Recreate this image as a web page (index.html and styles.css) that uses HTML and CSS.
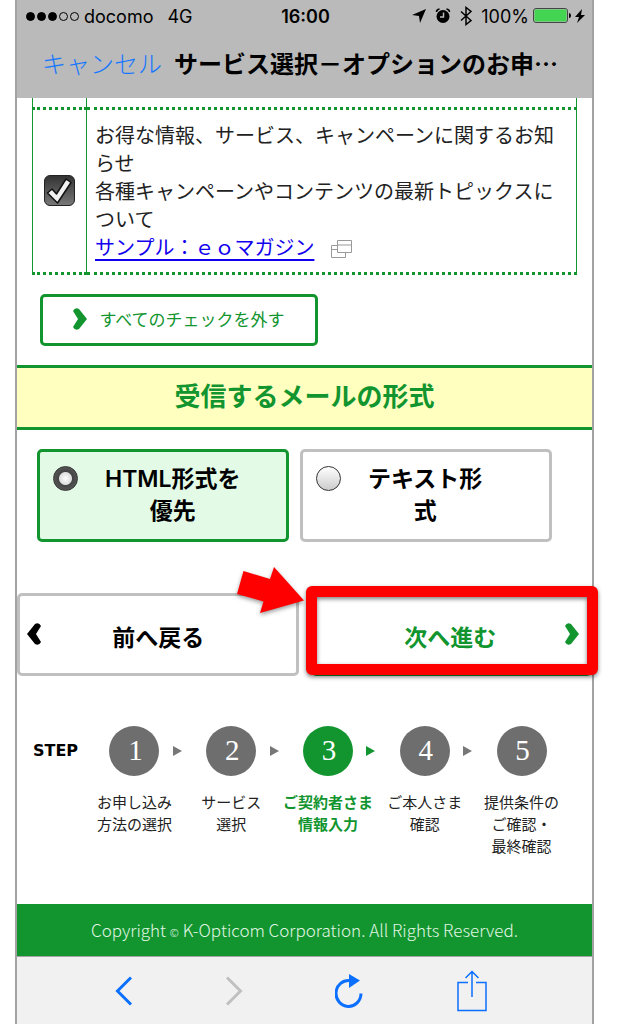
FILE: index.html
```html
<!DOCTYPE html>
<html lang="ja">
<head>
<meta charset="UTF-8">
<meta name="viewport" content="width=device-width, initial-scale=1.0">
<title>サービス選択－オプションのお申し込み</title>
<link rel="stylesheet" href="styles.css">
</head>
<body>
<div class="phone">
    <header class="top">
        <div class="status">
            <div class="status-left">
                <span class="signal"><i></i><i></i><i></i><i class="off"></i><i class="off"></i></span>
                <span>docomo</span>
                <span class="network">4G</span>
            </div>
            <span class="time">16:00</span>
            <div class="status-right">
                <svg width="14" height="14" viewBox="0 0 14 14"><path d="M0 6 L14 0 L8 14 L7 7 Z"/></svg>
                <svg class="alarm" width="16" height="16" viewBox="0 0 16 16"><circle cx="8" cy="8.500" r="6.500"/><path d="M1.500 4 Q1.500 1.500 4.500 1 M14.500 4 Q14.500 1.500 11.500 1" fill="none" stroke="#000" stroke-width="1.500"/><path d="M8.500 4.500 V9 H5" fill="none" stroke="#bababa" stroke-width="1.500"/></svg>
                <svg class="bluetooth" width="12" height="20" viewBox="0 0 12 20"><path d="M1 5.500 L11 14.500 L6 18.500 V1.500 L11 5.500 L1 14.500" fill="none" stroke="#000" stroke-width="1.500"/></svg>
                <span>100%</span>
                <svg class="battery" width="38" height="16" viewBox="0 0 38 16"><rect x=".5" y=".5" width="34" height="14" rx="2.500" fill="none" stroke="#444"/><rect x="1.500" y="1.500" width="32" height="12" rx="1" fill="#43d551"/><path d="M36 5 Q38 5 38 7.500 Q38 10 36 10 Z"/></svg>
                <svg class="bolt" width="10" height="14" viewBox="0 0 10 14"><path d="M7 0 L0 8 H4 L2 14 L10 6 H6 Z"/></svg>
            </div>
        </div>
        <div class="title-bar">
            <a href="#" class="cancel">キャンセル</a>
            <h1>サービス選択－オプションのお申…</h1>
        </div>
    </header>

    <main>
        <table class="news">
            <tr class="previous"><td class="check"></td><td></td></tr>
            <tr>
                <td class="check">
                    <label class="tick">
                        <input type="checkbox" id="magazine" aria-label="お得な情報を受け取る" checked>
                        <svg width="31" height="31" viewBox="0 0 31 31"><path d="M3.500 18 L8 14 L12.500 19 L22 4 L27 7.500 L13.500 28 Z" fill="#f2f2f2" stroke="#111" stroke-width="1.500" stroke-linejoin="round"/></svg>
                    </label>
                </td>
                <td class="detail">
                    お得な情報、サービス、キャンペーンに関するお知<br>らせ<br>
                    各種キャンペーンやコンテンツの最新トピックスに<br>ついて<br>
                    <a href="#">サンプル：ｅｏマガジン</a>
                    <svg class="window" width="22" height="18" viewBox="0 0 22 18"><path d="M6.500 .5 H20.500 V12.500 H6.500 Z M6.500 5 H20.500 M6 5.500 H.5 V17.500 H14.500 V13 M.5 9.500 H6" fill="none" stroke="#999"/></svg>
                </td>
            </tr>
        </table>

        <button type="button" class="uncheck">
            <svg width="14" height="22" viewBox="0 0 14 22"><path d="M0 3 Q2 -1 6 1 L14 11 L6 21 Q2 23 0 19 L5 11 Z" fill="#12952f"/></svg>
            すべてのチェックを外す
        </button>

        <h2>受信するメールの形式</h2>

        <div class="formats">
            <label class="format selected">
                <input type="radio" name="format" checked>
                <span>HTML形式を<br>優先</span>
            </label>
            <label class="format">
                <input type="radio" name="format">
                <span>テキスト形<br>式</span>
            </label>
        </div>

        <div class="actions">
            <button type="button" class="back">
                <svg width="14" height="22" viewBox="0 0 14 22"><path d="M14 3 Q12 -1 8 1 L0 11 L8 21 Q12 23 14 19 L9 11 Z"/></svg>
                <span>前へ戻る</span>
            </button>
            <div class="next-wrap">
                <button type="button" class="next">
                    <span>次へ進む</span>
                    <svg width="14" height="22" viewBox="0 0 14 22"><path d="M0 3 Q2 -1 6 1 L14 11 L6 21 Q2 23 0 19 L5 11 Z" fill="#12952f"/></svg>
                </button>
                <div class="highlight"></div>
                <svg class="pointer" width="68" height="46" viewBox="0 0 68 46"><path d="M6.500 4 L33 12 L37 0 L67 33.500 L23 46 L26.500 34.500 L0 27 Z" fill="#f00"/></svg>
            </div>
        </div>

        <div class="progress">
            <strong>STEP</strong>
            <ol>
                <li><b>1</b>お申し込み<br>方法の選択</li>
                <li><b>2</b>サービス<br>選択</li>
                <li class="current"><b>3</b>ご契約者さま<br>情報入力</li>
                <li><b>4</b>ご本人さま<br>確認</li>
                <li><b>5</b>提供条件の<br>ご確認・<br>最終確認</li>
            </ol>
        </div>
    </main>

    <footer>Copyright <small>©</small> K-Opticom Corporation. All Rights Reserved.</footer>

    <nav class="toolbar">
        <button type="button" aria-label="戻る"><svg width="18" height="30" viewBox="0 0 18 30"><path d="M16 1.500 L2.500 15 L16 28.500" fill="none" stroke="#0b6fff" stroke-width="3"/></svg></button>
        <button type="button" aria-label="進む"><svg width="18" height="30" viewBox="0 0 18 30"><path d="M2 1.500 L15.500 15 L2 28.500" fill="none" stroke="#c0c0c0" stroke-width="3"/></svg></button>
        <button type="button" aria-label="再読み込み"><svg width="30" height="34" viewBox="0 0 30 34"><path d="M15 6.500 A12.500 13 0 1 0 26 19.500" fill="none" stroke="#0b6fff" stroke-width="3"/><path d="M14 0 L25 6.500 L14 14 Z" fill="#0b6fff"/></svg></button>
        <button type="button" aria-label="共有"><svg width="30" height="42" viewBox="0 0 30 42"><path d="M11 12.500 H1 V40.500 H29 V12.500 H19 M15 27 V1 M8.500 8 L15 1.500 L21.500 8" fill="none" stroke="#0b6fff" stroke-width="1.500"/></svg></button>
    </nav>
</div>
</body>
</html>
```

FILE: styles.css
```css
* {
    box-sizing: border-box;
}
body {
    margin: 0;
    background-color: #fff;
    color: #222;
    font-family: "Noto Sans CJK JP", sans-serif;
}
button {
    font-family: inherit;
    margin: 0;
    padding: 0;
    cursor: pointer;
}
svg {
    flex: none;
}
.phone {
    display: flex;
    flex-direction: column;
    min-height: 100vh;
    margin: 0 23px 0 15px;
    border-left: 2px solid #a3a3a3;
    border-right: 2px solid #a3a3a3;
}

/* status bar and title */
.top {
    height: 98px;
    background-color: #bababa;
    color: #000;
}
.status {
    display: grid;
    grid-template-columns: 1fr auto 1fr;
    align-items: center;
    height: 32px;
    padding: 0 7px 0 9px;
    font-family: Inter, sans-serif;
    font-size: 18px;
}
.status-left,
.status-right {
    display: flex;
    align-items: center;
}
.status-right {
    justify-content: flex-end;
}
.signal {
    display: flex;
    gap: 2px;
    margin-right: 5px;
}
.signal i {
    width: 9px;
    height: 9px;
    border: 1px solid #000;
    border-radius: 50%;
    background-color: #000;
}
.signal .off {
    background-color: transparent;
}
.network {
    margin-left: 14px;
}
.time {
    font-weight: 600;
}
.alarm {
    margin-left: 9px;
}
.bluetooth {
    margin: 0 9px;
}
.battery {
    margin: 0 4px;
}
.title-bar {
    display: flex;
    align-items: center;
    height: 60px;
    gap: 12px;
    padding-left: 25px;
    font-size: 24px;
    white-space: nowrap;
}
.cancel {
    color: #1677ff;
    font-weight: 300;
    text-decoration: none;
}
h1 {
    margin: 0;
    font-size: 24px;
    font-weight: 700;
}

/* mail magazine list */
.news {
    width: calc(100% - 30px);
    margin: 0 15px;
    border-collapse: collapse;
}
.news td {
    padding: 0;
    border: 1px solid #12952f;
    border-top: 0;
    border-bottom: 3px dotted #12952f;
}
.previous {
    height: 10px;
}
.news .check {
    width: 54px;
    text-align: center;
    vertical-align: middle;
}
.tick {
    display: inline-block;
    position: relative;
    width: 31px;
    height: 31px;
    vertical-align: middle;
}
.tick input {
    appearance: none;
    display: block;
    width: 31px;
    height: 31px;
    margin: 0;
    border: 1px solid #222;
    border-radius: 6px;
    background: linear-gradient(#333, #777);
}
.tick svg {
    position: absolute;
    top: 0;
    left: 0;
    pointer-events: none;
}
.tick input:not(:checked) + svg {
    display: none;
}
.news .detail {
    padding: 11px 0 11px 8px;
    font-size: 20px;
    line-height: 28px;
    white-space: nowrap;
}
.detail a {
    color: #10e;
    text-underline-offset: 4px;
}
.window {
    margin-left: 12px;
    vertical-align: middle;
}
.uncheck {
    display: flex;
    align-items: center;
    justify-content: center;
    gap: 12px;
    width: 278px;
    height: 52px;
    margin: 19px 0 19px 23px;
    padding-bottom: 2px;
    border: 3px solid #12952f;
    border-radius: 5px;
    background-color: #fff;
    color: #12952f;
    font-size: 17px;
}

/* mail format */
h2 {
    margin: 0;
    padding: 9px 0 14px;
    border-top: 3px solid #12952f;
    border-bottom: 3px solid #12952f;
    background-color: #ffffc0;
    color: #12952f;
    font-size: 26px;
    line-height: 36px;
    text-align: center;
}
.formats {
    display: grid;
    grid-template-columns: 1fr 1fr;
    gap: 11px;
    margin: 19px 40px 0 20px;
}
.format {
    display: flex;
    align-items: flex-start;
    height: 93px;
    padding: 11px 0 0 13px;
    border: 3px solid #c0c0c0;
    border-radius: 5px;
    color: #000;
    font-family: Inter, "Noto Sans CJK JP", sans-serif;
    font-size: 23px;
    font-weight: 600;
    line-height: 32px;
    text-align: center;
    white-space: nowrap;
}
.format.selected {
    border-color: #12952f;
    background-color: #e3fbe6;
}
.format input {
    appearance: none;
    flex: none;
    width: 25px;
    height: 25px;
    margin: 3px 27px 0 0;
    border: 1px solid #333;
    border-radius: 50%;
    background: linear-gradient(#fff, #ccc);
}
.format input:checked {
    background: radial-gradient(circle, #fff 0, #ddd 6px, #444 7px, #666 100%);
}

/* previous / next */
.actions {
    display: grid;
    grid-template-columns: 1fr 1fr;
    gap: 12px;
    margin-top: 51px;
}
.back,
.next {
    display: flex;
    align-items: center;
    width: 100%;
    height: 83px;
    border: 3px solid #c0c0c0;
    border-radius: 5px;
    background-color: #fff;
    color: #000;
    font-size: 23px;
    font-weight: 700;
}
.back {
    padding: 0 20px 0 7px;
}
.next {
    padding: 0 10px 0 22px;
    border-color: #12952f;
    color: #12952f;
}
.back span,
.next span {
    flex: 1;
    padding-top: 4px;
}
.next-wrap {
    position: relative;
}
.highlight {
    position: absolute;
    inset: -7px -6px 1px -5px;
    border: 11px solid #f00;
    border-radius: 6px;
    filter: drop-shadow(0 2px 2px rgba(0, 0, 0, 0.5));
    pointer-events: none;
}
.pointer {
    position: absolute;
    top: -26px;
    left: -74px;
    filter: drop-shadow(0 2px 2px rgba(0, 0, 0, 0.4));
}

/* steps */
.progress {
    display: flex;
    margin: 50px 22px 0 16px;
}
.progress strong {
    width: 53px;
    color: #000;
    font-family: "DejaVu Sans", sans-serif;
    font-size: 16px;
    line-height: 50px;
}
ol {
    display: flex;
    flex: 1;
    margin: 0;
    padding: 0;
    list-style: none;
}
li {
    position: relative;
    flex: 1 1 0;
    font-size: 15px;
    line-height: 22px;
    text-align: center;
    white-space: nowrap;
}
li b {
    display: block;
    width: 50px;
    height: 50px;
    margin: 0 auto 15px;
    padding-left: 2px;
    border-radius: 50%;
    background-color: #6e6e6e;
    color: #fff;
    font-family: "Liberation Serif", serif;
    font-size: 29px;
    font-weight: 400;
    line-height: 48px;
}
li:not(:last-child)::after {
    content: "";
    position: absolute;
    top: 20px;
    right: 1px;
    border: 5px solid transparent;
    border-left: 9px solid #777;
    border-right: 0;
}
.current {
    color: #12952f;
    font-weight: 700;
}
.current b {
    background-color: #12952f;
}
li.current::after {
    border-left-color: #12952f;
}

footer {
    margin-top: auto;
    background-color: #12952f;
    color: #e0f5e3;
    font-size: 17px;
    font-weight: 300;
    line-height: 52px;
    text-align: center;
}
footer small {
    font-size: 11px;
    line-height: 1;
}
.toolbar {
    display: flex;
    justify-content: space-between;
    align-items: center;
    height: 68px;
    padding: 0 105px 0 98px;
    border-top: 1px solid #a3a3a3;
    background-color: #f1f1f1;
}
.toolbar button {
    display: flex;
    border: 0;
    background: none;
}
```
